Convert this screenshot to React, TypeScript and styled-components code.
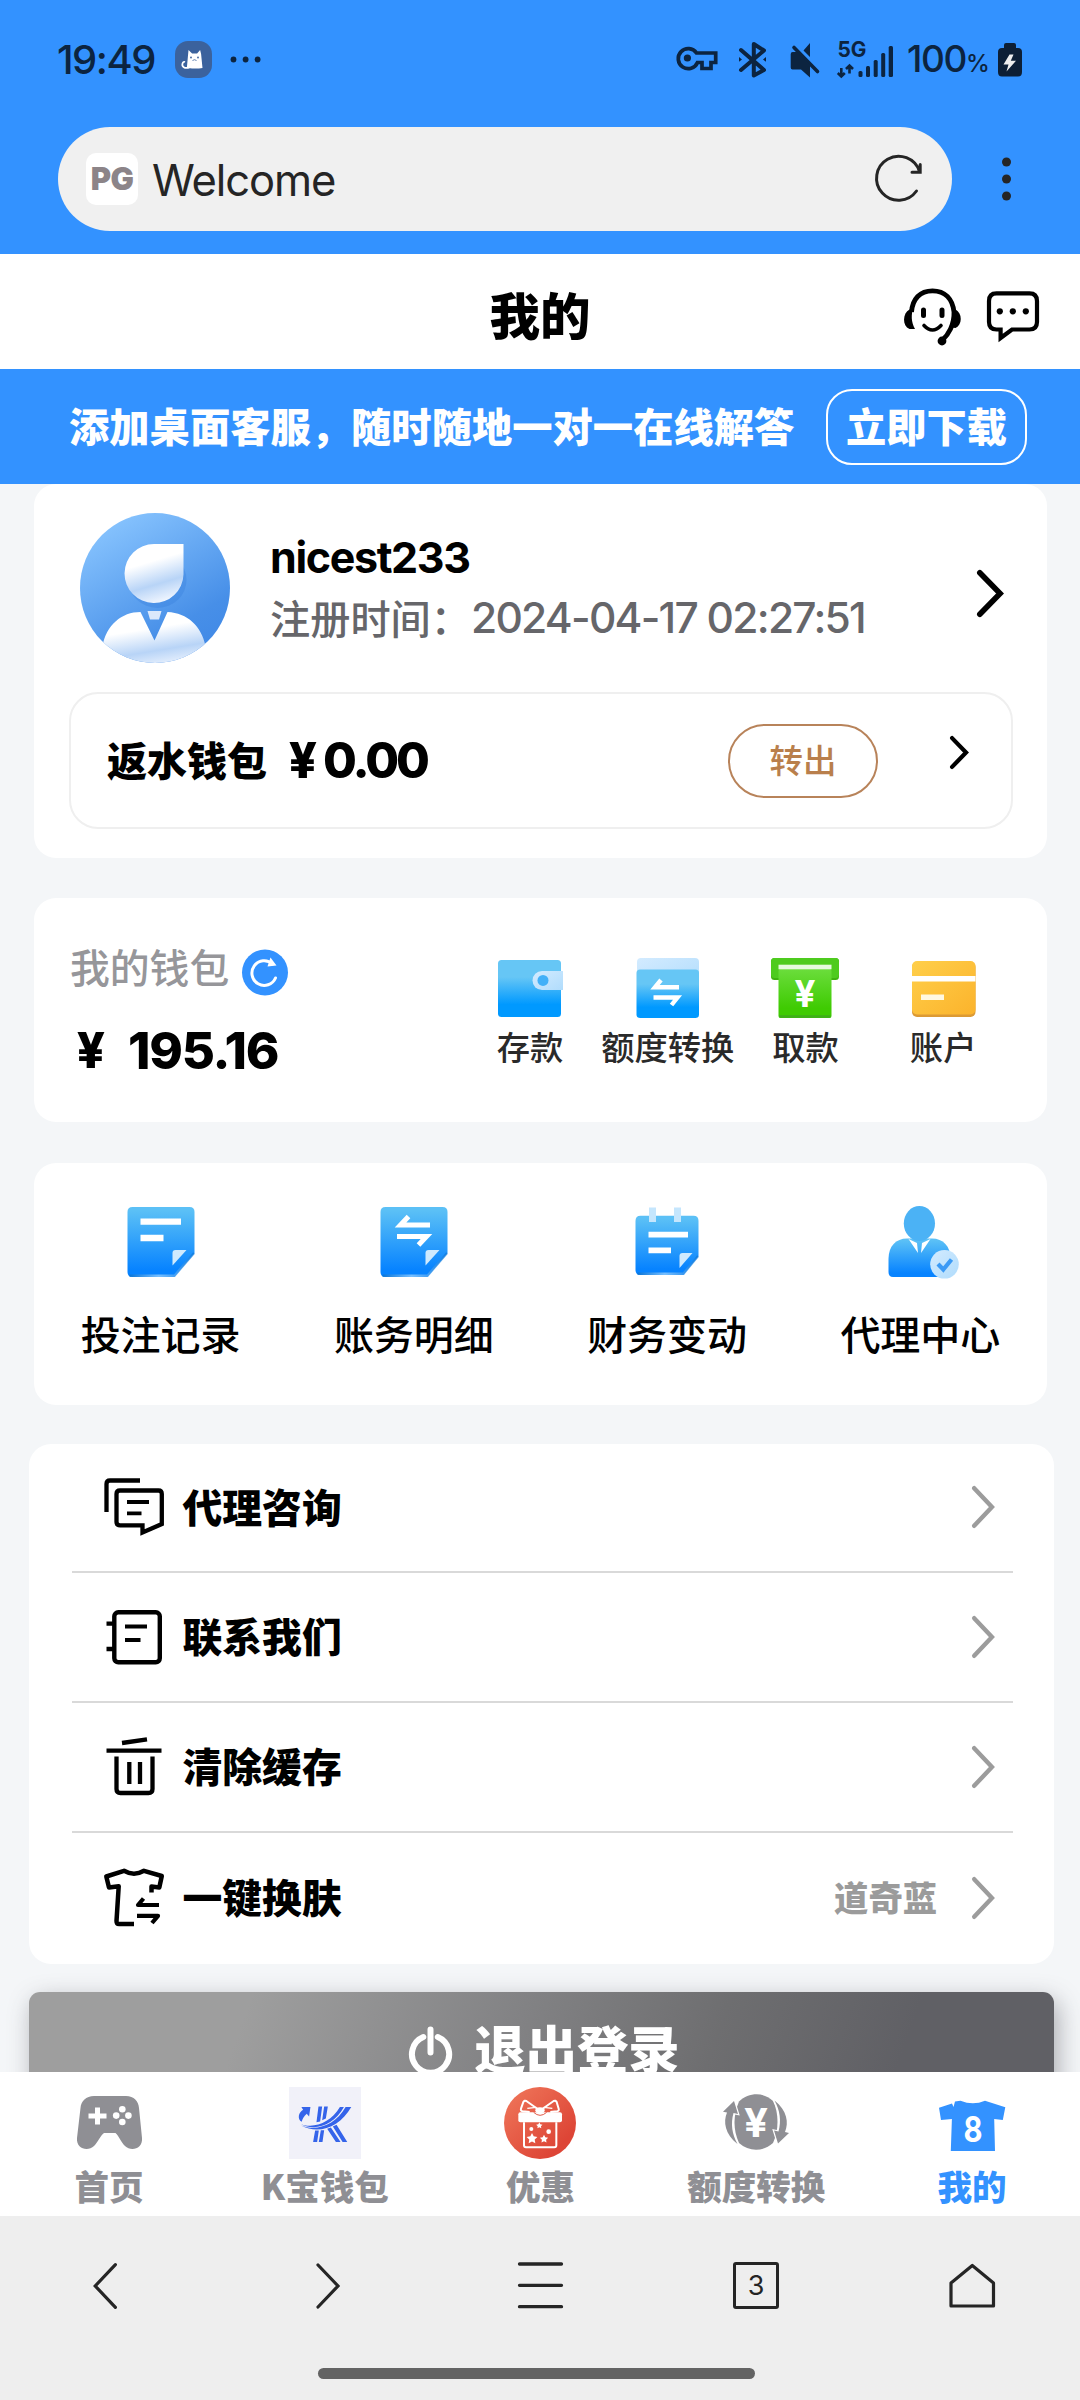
import React from "react";
import styled, { createGlobalStyle } from "styled-components";

const CJK = `"Noto Sans CJK SC", "Noto Sans", sans-serif`;
const LATIN = `Inter, "Noto Sans CJK SC", sans-serif`;

const GlobalStyle = createGlobalStyle`
  *, *::before, *::after { box-sizing: border-box; }
  body { margin: 0; background: #f4f6f8; font-family: ${CJK}; }
  svg { display: block; flex: none; overflow: visible; }
`;

/* ---------- shared ---------- */

const Screen = styled.div`
  width: 1080px;
  height: 2400px;
  overflow: hidden;
  display: flex;
  flex-direction: column;
  background: #f4f6f8;
  color: #000;
`;

type IconProps = { box: string; mt?: number; ml?: number; children: React.ReactNode };

const Svg = styled.svg<{ $mt: number; $ml: number }>`
  margin-top: ${(p) => p.$mt}px;
  margin-left: ${(p) => p.$ml}px;
`;

function Icon({ box, mt = 0, ml = 0, children }: IconProps) {
  const [, , w, h] = box.split(" ");
  return (
    <Svg viewBox={box} width={w} height={h} fill="none" $mt={mt} $ml={ml}>
      {children}
    </Svg>
  );
}

/* ---------- status bar ---------- */

const TopArea = styled.header`
  flex: none;
  height: 254px;
  background: #3392ff;
`;

const StatusBar = styled.div`
  height: 127px;
  padding: 0 58px 8px 57px;
  display: flex;
  align-items: center;
  justify-content: space-between;
  color: #0c2440;
  font-family: ${LATIN};
`;

const StatusGroup = styled.div`
  display: flex;
  align-items: center;
`;

const Clock = styled.span`
  width: 118px;
  font-size: 40px;
  font-weight: 500;
  letter-spacing: -1.5px;
  line-height: 48px;
`;

const Battery = styled.span`
  width: 105px;
  padding: 3px 0 0 14px;
  font-size: 37px;
  font-weight: 500;
  letter-spacing: -1.4px;
  line-height: 48px;
  white-space: nowrap;
  small {
    font-size: 24px;
    letter-spacing: 0;
  }
`;

/* ---------- address bar ---------- */

const AddressRow = styled.div`
  height: 104px;
  padding-left: 57.5px;
  display: flex;
  align-items: center;
`;

const AddressBar = styled.div`
  width: 894.5px;
  height: 104px;
  border-radius: 52px;
  background: #f0f0f0;
  padding: 0 31px 0 28.5px;
  display: flex;
  align-items: center;
  color: #252525;
`;

const Favicon = styled.div`
  width: 52px;
  height: 52px;
  border-radius: 10px;
  background: #fff;
  display: flex;
  align-items: center;
  justify-content: center;
  font: 900 31px/52px ${LATIN};
  letter-spacing: -0.5px;
  color: #8c8488;
`;

const PageName = styled.span`
  flex: 1;
  margin-left: 14px;
  padding-top: 2px;
  font: 400 43.5px/60px ${LATIN};
  letter-spacing: -1.1px;
`;

/* ---------- page header and banner ---------- */

const PageHeader = styled.div`
  flex: none;
  height: 115px;
  padding: 2px 41px 0;
  display: grid;
  grid-template-columns: 1fr auto 1fr;
  align-items: center;
  background: #fff;
`;

const PageTitle = styled.h1`
  grid-column: 2;
  margin: 0;
  font-size: 50.5px;
  font-weight: 900;
  line-height: 60px;
`;

const HeaderActions = styled.div`
  display: flex;
  justify-content: flex-end;
  gap: 26px;
  padding-top: 8px;
`;

const Banner = styled.div`
  flex: none;
  height: 115px;
  padding: 0 53px 0 69px;
  display: flex;
  align-items: center;
  justify-content: space-between;
  background: #3392ff;
  color: #fff;
  font-size: 40.3px;
  font-weight: 900;
  line-height: 50px;
`;

const BannerText = styled.span`
  padding-bottom: 3px;
`;

const DownloadButton = styled.button`
  width: 201px;
  height: 76px;
  padding: 0 0 4px;
  border: 2.5px solid #fff;
  border-radius: 26px;
  background: none;
  color: inherit;
  font: 900 40.2px/50px ${CJK};
`;

/* ---------- content ---------- */

const Content = styled.main`
  flex: none;
  height: 1588px;
  overflow: hidden;
  padding-left: 34px;
  padding-right: 33px;
`;

const Card = styled.section<{ $height: number; $gap?: number }>`
  height: ${(p) => p.$height}px;
  margin-top: ${(p) => p.$gap ?? 0}px;
  border-radius: 22px;
  background: #fff;
`;

const ProfileCard = styled(Card)`
  padding: 29px 34.5px 0 35px;
`;

const Profile = styled.div`
  height: 150px;
  padding: 0 9px 0 11px;
  display: flex;
  align-items: center;
`;

const ProfileText = styled.div`
  flex: 1;
  margin-left: 40px;
`;

const UserName = styled.div`
  font: 700 43px/60px ${LATIN};
  letter-spacing: -1.35px;
`;

const Registered = styled.div`
  padding-bottom: 2px;
  display: flex;
  font: 500 40.2px/60px ${CJK};
  color: #66666a;
  time {
    padding-top: 1px;
    font: 500 42.5px/60px ${LATIN};
    letter-spacing: -1.75px;
  }
`;

const RebateBox = styled.div`
  height: 137px;
  margin-top: 29px;
  padding: 0 41.5px 0 36px;
  display: flex;
  align-items: center;
  border: 2.5px solid #efefef;
  border-radius: 29px;
`;

const RebateLabel = styled.span`
  padding-bottom: 4px;
  font: 900 40px/60px ${CJK};
`;

const Amount = styled.span<{ $gap: number; $ml: number; $size: number; $track: number }>`
  margin-left: ${(p) => p.$ml}px;
  display: flex;
  gap: ${(p) => p.$gap}px;
  font: 800 ${(p) => p.$size}px/60px ${LATIN};
  letter-spacing: ${(p) => p.$track}px;
`;

const Yen = styled.span`
  width: 28px;
  display: inline-flex;
  justify-content: center;
  font-size: 49px;
  letter-spacing: 0;
`;

const TransferButton = styled.button`
  width: 150px;
  height: 74px;
  margin-left: auto;
  margin-right: 72px;
  padding: 0 0 4px;
  border: 2.5px solid #b8835a;
  border-radius: 37px;
  background: #fff;
  color: #b97f4c;
  font: 500 33.5px/44px ${CJK};
`;

const WalletCard = styled(Card)`
  padding: 45px 35px 0 36px;
  display: flex;
  justify-content: space-between;
`;

const WalletTitle = styled.div`
  height: 78px;
  display: flex;
  align-items: flex-start;
  gap: 13px;
  font: 500 39.8px/46px ${CJK};
  color: #96969a;
`;

const WalletActions = styled.div`
  padding-top: 15px;
  display: grid;
  grid-template-columns: repeat(4, 137.7px);
`;

const WalletAction = styled.div`
  display: flex;
  flex-direction: column;
  align-items: center;
  gap: 6px;
  font: 500 33.3px/44px ${CJK};
  color: #2a2a2a;
  white-space: nowrap;
`;

const ShortcutCard = styled(Card)`
  padding-top: 43px;
  display: grid;
  grid-template-columns: repeat(4, 1fr);
`;

const Shortcut = styled.div`
  display: flex;
  flex-direction: column;
  align-items: center;
  gap: 29px;
  font: 500 40px/50px ${CJK};
`;

const MenuCard = styled(Card)`
  margin-left: -5px;
  margin-right: -7px;
  padding: 0 41px 0 43px;
`;

const MenuRow = styled.div<{ $last?: boolean }>`
  height: 130px;
  display: flex;
  align-items: center;
  padding: 0 18px 0 32px;
  border-bottom: ${(p) => (p.$last ? "none" : "2px solid #d9d9d9")};
  &:first-child {
    height: 129px;
  }
`;

const MenuLabel = styled.span`
  flex: 1;
  margin-left: 18.5px;
  padding-bottom: 3px;
  font: 900 39.8px/56px ${CJK};
`;

const MenuValue = styled.span`
  margin-right: 35px;
  padding-bottom: 3px;
  font: 900 34.3px/50px ${CJK};
  color: #9b9b9b;
`;

const LogoutButton = styled.button`
  width: 1025px;
  height: 114px;
  margin: 28.5px 0 0 -5px;
  padding: 0 0 5px 6px;
  border: 0;
  border-radius: 11px;
  display: flex;
  align-items: center;
  justify-content: center;
  gap: 22px;
  background: linear-gradient(110deg, #9e9e9e 21%, #828284 47%, #6e6e70 66%, #606065 84%);
  box-shadow: 4px 8px 24px rgba(60, 60, 70, 0.4);
  color: #fff;
  font: 900 51.3px/60px ${CJK};
`;

/* ---------- bottom bars ---------- */

const TabBar = styled.nav`
  flex: none;
  position: relative;
  height: 144px;
  padding-left: 1px;
  display: grid;
  grid-template-columns: repeat(5, 1fr);
  background: #fff;
`;

const Tab = styled.div<{ $active?: boolean }>`
  padding-top: 15px;
  display: flex;
  flex-direction: column;
  align-items: center;
  gap: 1px;
  font: 900 34.5px/50px ${CJK};
  color: ${(p) => (p.$active ? "#3392ff" : "#8f8f94")};
`;

const BrowserBar = styled.footer`
  flex: none;
  height: 184px;
  background: #eeeeee;
`;

const BrowserActions = styled.div`
  height: 139px;
  padding: 0 85px 0 93px;
  display: flex;
  align-items: center;
`;

const TabCount = styled.div`
  width: 46px;
  height: 47px;
  margin-left: 170px;
  border: 3.4px solid #252525;
  border-radius: 3px;
  display: flex;
  align-items: center;
  justify-content: center;
  font: 400 27px/30px ${LATIN};
  color: #252525;
`;

const HomeIndicator = styled.div`
  width: 437px;
  height: 11px;
  margin: 13px 0 0 318px;
  border-radius: 6px;
  background: #636363;
`;

/* ---------- drawings ---------- */

const Defs = styled.svg`
  position: absolute;
`;

function Gradients() {
  return (
    <Defs width="0" height="0">
      <defs>
        <linearGradient id="blue" x1="0" y1="0" x2="0" y2="1">
          <stop offset="0.05" stopColor="#5bc0f6" />
          <stop offset="0.9" stopColor="#0783ff" />
        </linearGradient>
        <linearGradient id="cyan" x1="0" y1="0" x2="0" y2="1">
          <stop offset="0.3" stopColor="#66c6f5" />
          <stop offset="0.78" stopColor="#0099ff" />
        </linearGradient>
        <linearGradient id="pale" x1="0" y1="0" x2="1" y2="1">
          <stop offset="0" stopColor="#d3ebff" />
          <stop offset="1" stopColor="#b0dcfc" />
        </linearGradient>
        <linearGradient id="gloss" x1="0" y1="0" x2="1" y2="0">
          <stop offset="0" stopColor="#0a6fc8" />
          <stop offset="0.45" stopColor="#a6d8ff" />
          <stop offset="1" stopColor="#0a76d8" />
        </linearGradient>
        <linearGradient id="green" x1="0" y1="0" x2="0" y2="1">
          <stop offset="0" stopColor="#6bdd3c" />
          <stop offset="0.8" stopColor="#3fcb02" />
        </linearGradient>
        <linearGradient id="gold" x1="0" y1="0" x2="1" y2="1">
          <stop offset="0" stopColor="#ffcf4a" />
          <stop offset="1" stopColor="#fbb32c" />
        </linearGradient>
        <linearGradient id="sky" x1="0.2" y1="0" x2="0.8" y2="1">
          <stop offset="0" stopColor="#8ac6ff" />
          <stop offset="0.75" stopColor="#478fe8" />
          <stop offset="1" stopColor="#3f88e6" />
        </linearGradient>
        <linearGradient id="pearl" x1="0.35" y1="0" x2="0.65" y2="1">
          <stop offset="0.3" stopColor="#ffffff" />
          <stop offset="0.68" stopColor="#b8d4f7" />
          <stop offset="1" stopColor="#f4f8ff" />
        </linearGradient>
        <linearGradient id="coral" x1="0" y1="0" x2="1" y2="1">
          <stop offset="0.1" stopColor="#ee7257" />
          <stop offset="0.8" stopColor="#dd4536" />
        </linearGradient>
      </defs>
    </Defs>
  );
}

const Chevron = ({ w, h, stroke, color, mt, flip }: {
  w: number; h: number; stroke: number; color: string; mt?: number; flip?: boolean;
}) => (
  <Icon box={`0 0 ${w} ${h}`} mt={mt}>
    <path
      d={
        flip
          ? `M${w - stroke / 2} ${stroke / 2}L${stroke * 0.7} ${h / 2}L${w - stroke / 2} ${h - stroke / 2}`
          : `M${stroke / 2} ${stroke / 2}L${w - stroke * 0.7} ${h / 2}L${stroke / 2} ${h - stroke / 2}`
      }
      stroke={color}
      strokeWidth={stroke}
      strokeLinecap="round"
    />
  </Icon>
);

const CatIcon = () => (
  <Icon box="175.5 41 37 37">
    <rect x="175.5" y="41" width="37" height="37" rx="13" fill="#3b629d" />
    <path d="M189 50l3.6 3.4h5L200.6 50l1 4 1.4 14q-7 1-14 0l-1.600-.6z" fill="#fff" />
    <path d="M190 67.500c-5 1.500-8-1-7-4 .5-1.500 1.500-2 2.500-1.500" stroke="#fff" strokeWidth="1.700" />
    <circle cx="191.500" cy="57.500" r=".9" fill="#3b629d" />
    <circle cx="198.500" cy="57.500" r=".9" fill="#3b629d" />
    <path d="M193 60.500l2-.8 2 .8" stroke="#3b629d" strokeWidth=".8" />
  </Icon>
);

const StatusIcons = () => (
  <Icon box="676 41 217 38">
    <g stroke="#0c2440" strokeWidth="3.700">
      <path d="M696.500 53H715.700V62.500H711V68.500H702V62.500H697.500A10 10 0 1 1 696.500 53Z" strokeLinejoin="miter" />
      <path d="M741 50L764 70L753.800 75.500V44L764 50.500L741 70" strokeWidth="4" strokeLinejoin="round" strokeLinecap="round" />
      <path d="M794 47.500L817.500 71.500" strokeWidth="3.600" strokeLinecap="round" />
    </g>
    <g fill="#0c2440">
      <circle cx="687.400" cy="58" r="3.600" />
      <path d="M739 57l3 2.400-3 2.400zM766 57l-3 2.400 3 2.400z" />
      <path d="M803.500 50.500L810 43V57zM790.700 54q0-2 2-2H797L810 65.500V77.500L801 69.500H792.500q-1.800 0-1.800-2z" />
      <rect x="858.500" y="71" width="4" height="6" rx="1.500" />
      <rect x="866" y="66" width="4" height="11" rx="1.500" />
      <rect x="873.700" y="60" width="4" height="17" rx="1.500" />
      <rect x="881.200" y="53" width="4" height="24" rx="1.500" />
      <rect x="888.700" y="46" width="4.300" height="31" rx="1.500" />
      <text x="837.500" y="57" fontFamily="Inter, sans-serif" fontWeight="700" fontSize="21.500" textLength="29" lengthAdjust="spacingAndGlyphs">5G</text>
    </g>
    <path d="M841.300 68v7.500M837.800 73l3.500 3.500 3.500-3.500M849.500 73.500V66M846 69l3.500-3.500 3.500 3.500" stroke="#0c2440" strokeWidth="2.600" />
  </Icon>
);

const BatteryIcon = () => (
  <Icon box="998 43 24 34">
    <path d="M1004 48v-3q0-2 2-2h8q2 0 2 2v3h2q4 0 4 4v20q0 4.500-4 4.500h-16q-4 0-4-4.500V52q0-4 4-4z" fill="#0d1f36" />
    <path d="M1009.500 54.500L1003.500 64.500H1008.500L1006.500 71.500L1016 60.800H1010.800L1013.500 54.500z" fill="#eee" />
  </Icon>
);

const ReloadIcon = () => (
  <Icon box="875 156 46 47">
    <path d="M919.500 171.500A22 22 0 1 0 916.500 191M920.200 164.500V172.300H912" stroke="#252525" strokeWidth="3" strokeLinecap="round" />
  </Icon>
);

const HeadsetIcon = () => (
  <Icon box="904 288 57 58">
    <path d="M911.500 312C912.500 299 920 290.800 932.500 290.800S952.500 299 954 312C954.500 325 948 335 942.500 340" stroke="#000" strokeWidth="4.800" />
    <path d="M909.500 309.500C902.500 313 902 326 909.500 329H915C911 322 911 314 913.500 308zM955.500 309.500C962.500 313 962.500 325 955.500 328L951.500 327.500C954 320 954 314 952 308z" fill="#000" />
    <path d="M923.500 310v5.500M942 310v5.500" stroke="#000" strokeWidth="5" strokeLinecap="round" />
    <path d="M924 325.500Q932.500 334.500 941 325.500" stroke="#000" strokeWidth="3.600" strokeLinecap="round" />
    <circle cx="942" cy="341" r="4.400" fill="#000" />
  </Icon>
);

const ChatIcon = () => (
  <Icon box="987 288 52 58">
    <path d="M996.500 293.300H1029.500Q1037 293.300 1037 301V322Q1037 329.500 1029.500 329.500H1012L1000.600 338V329.500H996.500Q989 329.500 989 322V301Q989 293.300 996.500 293.300Z" stroke="#000" strokeWidth="4.200" />
    <g fill="#000">
      <circle cx="999.800" cy="311.300" r="3.100" />
      <circle cx="1012.800" cy="311.300" r="3.100" />
      <circle cx="1025.800" cy="311.300" r="3.100" />
    </g>
  </Icon>
);

const Avatar = () => (
  <Icon box="80.500 513 150 150">
    <clipPath id="round"><circle cx="155.500" cy="588" r="75" /></clipPath>
    <g clipPath="url(#round)">
      <rect x="80" y="513" width="151" height="151" fill="url(#sky)" />
      <ellipse cx="158" cy="580" rx="29" ry="28" fill="#2f78d8" opacity="0.28" />
      <path d="M184 544V574.500A29.500 29.500 0 1 1 154.500 544Z" fill="url(#pearl)" />
      <path d="M103 646C107 625 122 612 141 612L155 640.500L168 612C188 613 202 626 206 646L200 668H108Z" fill="url(#pearl)" />
      <path d="M148 611h14l-2.500 8.500h-9z" fill="#dbe8fb" />
    </g>
  </Icon>
);

const RefreshBadge = () => (
  <Icon box="242 949 46 47" mt={6}>
    <circle cx="265" cy="972.500" r="23" fill="#3392ff" />
    <path d="M272.500 964A12.300 12.300 0 1 0 275.500 978" stroke="#fff" strokeWidth="3" strokeLinecap="round" />
    <path d="M270.500 957.500L276.500 965.500L267.500 966.500Z" fill="#fff" />
  </Icon>
);

const WalletIcon = () => (
  <Icon box="496 958 68 60">
    <rect x="498" y="960" width="63" height="57" rx="3.500" fill="url(#cyan)" />
    <path d="M500 1015.500h59" stroke="url(#gloss)" strokeWidth="2.600" opacity="0.800" />
    <path d="M563 971H542A9.500 9.500 0 0 0 542 990H563z" fill="url(#pale)" />
    <circle cx="543" cy="980.400" r="5.500" fill="#42b0f8" />
  </Icon>
);

const QuotaIcon = () => (
  <Icon box="634 958 68 60">
    <rect x="637" y="958" width="62" height="28" rx="4" fill="url(#pale)" />
    <rect x="636.500" y="969.500" width="62.500" height="48.500" rx="3.500" fill="url(#cyan)" />
    <path d="M639 1016.500h57.500" stroke="url(#gloss)" strokeWidth="2.600" opacity="0.800" />
    <path d="M679 987.200H655L661 980M653.500 997.500H677.500L671.500 1005" stroke="#fff" strokeWidth="4.400" />
  </Icon>
);

const WithdrawIcon = () => (
  <Icon box="771.500 958 68 60">
    <rect x="771.500" y="958" width="68" height="22" rx="3.500" fill="#3fb30f" />
    <rect x="771.500" y="958" width="68" height="20" rx="3.500" fill="#4ecb1e" />
    <rect x="779" y="969" width="53" height="49" rx="2" fill="url(#green)" />
    <path d="M780 1016.500h51" stroke="#3fae1a" strokeWidth="2.600" />
    <rect x="779" y="964.700" width="53" height="4.600" fill="#e6fadf" />
    <text x="805.500" y="1007" textAnchor="middle" fontFamily="Inter, sans-serif" fontWeight="700" fontSize="37" textLength="21" lengthAdjust="spacingAndGlyphs" fill="#fff">¥</text>
  </Icon>
);

const BankCardIcon = () => (
  <Icon box="909 958 68 60">
    <rect x="912" y="962" width="63.500" height="55" rx="5" fill="#dc9a34" />
    <rect x="912" y="961" width="63.500" height="53.500" rx="5" fill="url(#gold)" />
    <rect x="912" y="976" width="63.500" height="5.500" fill="#fff" />
    <rect x="921" y="994.500" width="23" height="5.500" fill="#fff8e2" />
  </Icon>
);

const Sheet = () => (
  <>
    <path d="M133 1207H190Q195 1207 195 1212V1253L175 1277H133Q128 1277 128 1272V1212Q128 1207 133 1207Z" fill="url(#blue)" />
    <path d="M130 1275.700H175L194.500 1253" stroke="url(#gloss)" strokeWidth="2.400" opacity="0.700" />
    <path d="M176 1250H187L173 1265.500V1253Q173 1250 176 1250Z" fill="#cfeafe" />
  </>
);

const BetRecordIcon = () => (
  <Icon box="121.500 1206 80 73">
    <Sheet />
    <path d="M141 1221.700H181.500M141 1238H164" stroke="#fff" strokeWidth="6.300" />
  </Icon>
);

const BillIcon = () => (
  <Icon box="121.500 1206 80 73">
    <Sheet />
    <path d="M177.500 1225H148L156 1216.500M144.500 1236.500H174L166 1245" stroke="#fff" strokeWidth="5" />
  </Icon>
);

const FinanceIcon = () => (
  <Icon box="627.500 1206 80 73">
    <path d="M641 1215.700H694Q699 1215.700 699 1221V1256L684 1275H641Q636 1275 636 1270V1221Q636 1215.700 641 1215.700Z" fill="url(#blue)" />
    <path d="M638 1273.700H684L698.500 1256" stroke="url(#gloss)" strokeWidth="2.400" opacity="0.700" />
    <path d="M683 1253H693L680 1268V1256Q680 1253 683 1253Z" fill="#cfeafe" />
    <path d="M653 1207.500V1222M678 1207.500V1222" stroke="#c5e6fd" strokeWidth="7" />
    <path d="M649 1234.700H688.500M649 1250.300H671.500" stroke="#fff" strokeWidth="5.800" />
  </Icon>
);

const AgentIcon = () => (
  <Icon box="881 1206 80 73">
    <path d="M889.500 1259C889.500 1246 897 1238.500 908 1238.500H933C944 1238.500 951.500 1246 951.500 1259V1277H894Q889.500 1277 889.500 1272Z" fill="url(#blue)" />
    <path d="M892 1275.700h45" stroke="url(#gloss)" strokeWidth="2.400" opacity="0.700" />
    <path d="M909.500 1239L919 1253L918 1243zM931.500 1239L922 1253L923 1243z" fill="#fff" />
    <ellipse cx="920.400" cy="1223.500" rx="15.600" ry="17.500" fill="#4bb2f5" />
    <circle cx="945.500" cy="1264.300" r="14.300" fill="url(#pale)" />
    <path d="M939 1264L944.300 1269.500L952.500 1259.500" stroke="#3b9af5" strokeWidth="4.200" />
  </Icon>
);

const ConsultIcon = () => (
  <Icon box="104 1478 60 60">
    <g stroke="#000" strokeWidth="4.300">
      <path d="M140 1481.500H110Q106.500 1481.500 106.500 1485V1513" />
      <path d="M120 1491.500H158.500Q161.800 1491.500 161.800 1495V1525L142.500 1533.500V1526.300H120Q116.500 1526.300 116.500 1523V1495Q116.500 1491.500 120 1491.500Z" />
      <path d="M127 1503H149M127 1514.400H141.500" strokeWidth="3.900" />
    </g>
  </Icon>
);

const ContactIcon = () => (
  <Icon box="104 1607 60 60">
    <g stroke="#000" strokeWidth="4.400">
      <rect x="114.300" y="1612.300" width="45.500" height="50" rx="4" />
      <path d="M106.500 1623.600H114M106.500 1649H114" />
      <path d="M125 1626.400H147M125 1640H140.500" strokeWidth="4" />
    </g>
  </Icon>
);

const TrashIcon = () => (
  <Icon box="104 1738 60 60">
    <g stroke="#000" strokeWidth="4.300">
      <path d="M122 1744L147 1740.400M106.500 1751.700H161.500" />
      <path d="M116.500 1757.500V1790Q116.500 1794 120.500 1794H148.500Q152.500 1794 152.500 1790V1757.500" />
      <path d="M129.300 1762.900V1785M140 1762.900V1785" />
    </g>
  </Icon>
);

const SkinIcon = () => (
  <Icon box="104 1869 60 60">
    <g stroke="#000" strokeWidth="4.500" strokeLinejoin="round">
      <path d="M151.500 1893.500V1887.500L159.300 1888.500L161.800 1877L144 1871.800Q134 1877.500 124 1871.800L106.300 1877.500L109 1888.500L118.700 1887.300L116.500 1922Q116.500 1925 119 1925H134" />
      <path d="M159 1906H138L143.500 1899.500M137 1916.800H158L152 1924" strokeWidth="4.200" />
    </g>
  </Icon>
);

const PowerIcon = () => (
  <Icon box="409 2029 43 49" mt={8}>
    <path d="M423.300 2040A18.600 18.600 0 1 0 437.800 2040M430.500 2032.500V2055.500" stroke="#fff" strokeWidth="6" strokeLinecap="round" />
  </Icon>
);

const GamepadIcon = () => (
  <Icon box="72 2087 72 72">
    <path d="M93 2096H125C133 2096 137.500 2101 138 2108L141 2138C142 2149 130 2152 124 2146C120 2142 118 2136 114.500 2133H103C99 2136 97 2142 93 2146C87 2152 75 2149 76 2138L79.500 2108C80 2101 85 2096 93 2096Z" fill="#8f8f94" />
    <path d="M96.500 2107.500V2124.500M87.500 2116H105.500" stroke="#fff" strokeWidth="5" />
    <g fill="#fff">
      <circle cx="121.300" cy="2109.300" r="3.300" />
      <circle cx="115.200" cy="2115.600" r="3.300" />
      <circle cx="127.400" cy="2115.600" r="3.300" />
      <circle cx="121.300" cy="2122" r="3.300" />
    </g>
  </Icon>
);

const KWalletIcon = () => (
  <svg width="72" height="72" viewBox="26 32 215 215" fill="none">
    <rect x="26" y="32" width="215" height="215" fill="#f1f1f9" />
    <g fill="#3564ea">
      <path d="M114 90H125L119 135L108 137ZM131 90H142L136 126L125 131Z" />
      <path d="M104 162H115L110 196H98ZM121 161H131L126 196H115Z" />
      <path d="M140 157L151 153L180 196H166ZM157 150L168 145L200 196H186Z" />
      <path d="M56 140C95 160 150 140 178 92H190C158 150 100 166 56 140Z" />
      <path d="M62 147C110 166 165 145 195 92H212C178 152 115 176 62 147Z" />
      <path d="M63 92H90L86 120L79 112C70 120 66 128 64 136C50 128 54 108 68 100Z" />
    </g>
  </svg>
);

const Star = ({ x, y, r }: { x: number; y: number; r: number }) => {
  const points = Array.from({ length: 10 }, (_, i) => {
    const a = (Math.PI / 5) * i - Math.PI / 2;
    const d = i % 2 ? r * 0.5 : r;
    return `${(x + d * Math.cos(a)).toFixed(1)},${(y + d * Math.sin(a)).toFixed(1)}`;
  }).join(" ");
  return <polygon points={points} fill="#fff" />;
};

const GiftIcon = () => (
  <svg width="72" height="72" viewBox="675 32 216 216" fill="none">
    <circle cx="783" cy="140" r="108" fill="url(#coral)" />
    <g stroke="#fff" strokeWidth="6" strokeLinejoin="round">
      <path d="M776 98L742 74Q736 71 733 77L726 97Q724 104 731 105L752 107M790 98L824 74Q830 71 833 77L839 97Q841 104 834 105L814 107" />
      <path d="M772 93L745 96M794 93L820 96" strokeWidth="4" />
      <path d="M735 138V207Q735 213 741 213H826Q832 213 832 207V138" />
    </g>
    <ellipse cx="783" cy="102" rx="14" ry="9" fill="#fff" />
    <rect x="718" y="108" width="131" height="30" rx="6" fill="#fff" />
    <path d="M764 108Q783 126 803 108" stroke="#e25a48" strokeWidth="3" />
    <Star x={759} y={187} r={17} />
    <Star x={795} y={188} r={13} />
    <Star x={781} y={148} r={10} />
    <circle cx="757" cy="158" r="6" fill="#fff" />
    <circle cx="809" cy="166" r="7" fill="#fff" />
  </svg>
);

const ExchangeIcon = () => (
  <Icon box="721 2087 72 72">
    <path d="M740 2101.500C750 2092 765 2092 774 2101C780 2113 780 2130 774 2143C764 2152 750 2152 740 2143C734 2130 734 2115 740 2101.500Z" fill="#8f8f94" />
    {[0, 180].map((turn) => (
      <g key={turn} transform={`rotate(${turn} 757 2122.300)`}>
        <path
          d="M738.500 2144C726 2134 724 2122 728 2112.500L724 2111.700L735 2101L739 2114L734.500 2113C731.500 2124 733 2134 738.500 2144Z"
          fill="#8f8f94"
          stroke="#fff"
          strokeWidth="2.400"
          paintOrder="stroke"
        />
      </g>
    ))}
    <text x="757" y="2137" textAnchor="middle" fontFamily="Inter, sans-serif" fontWeight="700" fontSize="40" textLength="24" lengthAdjust="spacingAndGlyphs" fill="#fff">¥</text>
  </Icon>
);

const JerseyIcon = () => (
  <Icon box="937 2087 72 72">
    <path d="M940 2107.700L953 2103.500L954.500 2107L956 2101.500L961.500 2100.700Q974 2106 986 2100.700L1006.300 2107.300L1003.800 2120L995.200 2119L996 2151H951.800L952.900 2119L942 2120Z" fill="#3392ff" />
    <text x="974" y="2141.500" textAnchor="middle" fontFamily="Inter, sans-serif" fontWeight="700" fontSize="36" textLength="19" lengthAdjust="spacingAndGlyphs" fill="#fff">8</text>
  </Icon>
);

/* ---------- data ---------- */

const walletActions = [
  { label: "存款", icon: <WalletIcon /> },
  { label: "额度转换", icon: <QuotaIcon /> },
  { label: "取款", icon: <WithdrawIcon /> },
  { label: "账户", icon: <BankCardIcon /> },
];

const shortcuts = [
  { label: "投注记录", icon: <BetRecordIcon /> },
  { label: "账务明细", icon: <BillIcon /> },
  { label: "财务变动", icon: <FinanceIcon /> },
  { label: "代理中心", icon: <AgentIcon /> },
];

const menu = [
  { label: "代理咨询", icon: <ConsultIcon /> },
  { label: "联系我们", icon: <ContactIcon /> },
  { label: "清除缓存", icon: <TrashIcon /> },
  { label: "一键换肤", icon: <SkinIcon />, value: "道奇蓝" },
];

const tabs = [
  { label: "首页", icon: <GamepadIcon /> },
  { label: "K宝钱包", icon: <KWalletIcon /> },
  { label: "优惠", icon: <GiftIcon /> },
  { label: "额度转换", icon: <ExchangeIcon /> },
  { label: "我的", icon: <JerseyIcon />, active: true },
];

/* ---------- page ---------- */

export default function App() {
  return (
    <Screen>
      <GlobalStyle />
      <Gradients />
      <TopArea>
        <StatusBar>
          <StatusGroup>
            <Clock>19:49</Clock>
            <CatIcon />
            <Icon box="230 56 31 7" ml={18}>
              <g fill="#0c2440">
                <circle cx="233.500" cy="59.500" r="2.900" />
                <circle cx="245.600" cy="59.500" r="2.900" />
                <circle cx="257.600" cy="59.500" r="2.900" />
              </g>
            </Icon>
          </StatusGroup>
          <StatusGroup>
            <StatusIcons />
            <Battery>100<small>%</small></Battery>
            <BatteryIcon />
          </StatusGroup>
        </StatusBar>
        <AddressRow>
          <AddressBar>
            <Favicon>PG</Favicon>
            <PageName>Welcome</PageName>
            <ReloadIcon />
          </AddressBar>
          <Icon box="1002 156 9 46" ml={50}>
            <g fill="#252525">
              <circle cx="1006.500" cy="162" r="4.500" />
              <circle cx="1006.500" cy="179" r="4.500" />
              <circle cx="1006.500" cy="196" r="4.500" />
            </g>
          </Icon>
        </AddressRow>
      </TopArea>

      <PageHeader>
        <PageTitle>我的</PageTitle>
        <HeaderActions>
          <HeadsetIcon />
          <ChatIcon />
        </HeaderActions>
      </PageHeader>

      <Banner>
        <BannerText>添加桌面客服，随时随地一对一在线解答</BannerText>
        <DownloadButton>立即下载</DownloadButton>
      </Banner>

      <Content>
        <ProfileCard $height={373.5}>
          <Profile>
            <Avatar />
            <ProfileText>
              <UserName>nicest233</UserName>
              <Registered>注册时间：<time>2024-04-17 02:27:51</time></Registered>
            </ProfileText>
            <Chevron w={27} h={47} stroke={5.6} color="#000" mt={11} />
          </Profile>
          <RebateBox>
            <RebateLabel>返水钱包</RebateLabel>
            <Amount $gap={6} $ml={22} $size={49} $track={-3}><Yen>¥</Yen>0.00</Amount>
            <TransferButton>转出</TransferButton>
            <Chevron w={19} h={33} stroke={4.2} color="#000" mt={-16} />
          </RebateBox>
        </ProfileCard>

        <WalletCard $height={224} $gap={40.5}>
          <div>
            <WalletTitle>我的钱包<RefreshBadge /></WalletTitle>
            <Amount $gap={23} $ml={7} $size={51} $track={-1.3}><Yen>¥</Yen>195.16</Amount>
          </div>
          <WalletActions>
            {walletActions.map((a) => (
              <WalletAction key={a.label}>{a.icon}{a.label}</WalletAction>
            ))}
          </WalletActions>
        </WalletCard>

        <ShortcutCard $height={241.5} $gap={41}>
          {shortcuts.map((s) => (
            <Shortcut key={s.label}>{s.icon}{s.label}</Shortcut>
          ))}
        </ShortcutCard>

        <MenuCard $height={520} $gap={39}>
          {menu.map((m, i) => (
            <MenuRow key={m.label} $last={i === menu.length - 1}>
              {m.icon}
              <MenuLabel>{m.label}</MenuLabel>
              {m.value && <MenuValue>{m.value}</MenuValue>}
              <Chevron w={23} h={42} stroke={4.4} color="#9c9c9c" />
            </MenuRow>
          ))}
        </MenuCard>

        <LogoutButton><PowerIcon />退出登录</LogoutButton>
      </Content>

      <TabBar>
        {tabs.map((t) => (
          <Tab key={t.label} $active={t.active}>{t.icon}{t.label}</Tab>
        ))}
      </TabBar>

      <BrowserBar>
        <BrowserActions>
          <Chevron w={24} h={46} stroke={3.2} color="#252525" flip />
          <Icon box="0 0 24 46" ml={199}>
            <path d="M2 2L22 23L2 44" stroke="#252525" strokeWidth="3.200" strokeLinecap="round" />
          </Icon>
          <Icon box="518 2262 45 47" ml={178}>
            <path d="M519.500 2264H561.500M519.500 2285.300H561.500M519.500 2306.700H561.500" stroke="#252525" strokeWidth="3.300" strokeLinecap="round" />
          </Icon>
          <TabCount>3</TabCount>
          <Icon box="949 2262 46 47" ml={170}>
            <path d="M951 2283L972.300 2265.500L993.500 2283V2306H951Z" stroke="#252525" strokeWidth="3.200" strokeLinejoin="round" />
          </Icon>
        </BrowserActions>
        <HomeIndicator />
      </BrowserBar>
    </Screen>
  );
}
